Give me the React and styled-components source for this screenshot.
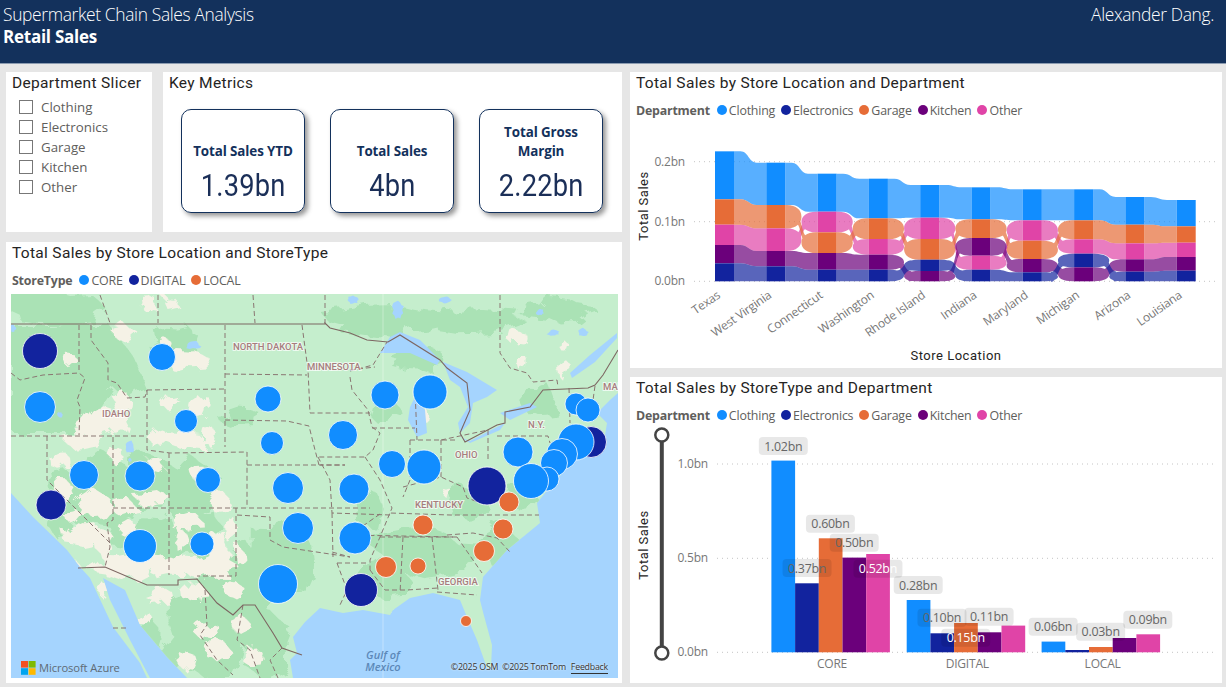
import React from "react";
import styled, { createGlobalStyle } from "styled-components";

const GlobalStyle = createGlobalStyle`
  html, body { margin: 0; padding: 0; background: #e6e6e6; }
  body { width: 1226px; height: 687px; overflow: hidden; font-family: "Open Sans", "Liberation Sans", sans-serif; }
`;

const COLORS = {
  Clothing: "#118DFF",
  Electronics: "#12239E",
  Garage: "#E66C37",
  Kitchen: "#6B007B",
  Other: "#E044A7",
};

const Page = styled.div`
  width: 1226px;
  height: 687px;
  display: flex;
  flex-direction: column;
`;

const Header = styled.header`
  height: 64px;
  flex: none;
  background: #13315c;
  border-bottom: 1px solid #8b9bb0;
  box-sizing: border-box;
  color: #fff;
  display: flex;
  justify-content: space-between;
  padding: 2px 12px 0 3px;
`;

const HeaderTitle = styled.div`
  font-size: 17.4px;
  line-height: 24px;
  font-weight: 300;
  letter-spacing: -0.35px;
`;

const HeaderSub = styled.div`
  font-size: 17px;
  line-height: 22px;
  font-weight: 700;
  letter-spacing: -0.25px;
`;

const Body = styled.div`
  display: flex;
  gap: 8px;
  padding: 8px 4px 0 6px;
`;

const Column = styled.div`
  width: ${(p) => p.$w}px;
  display: flex;
  flex-direction: column;
  gap: ${(p) => p.$gap}px;
`;

const TopRow = styled.div`
  display: flex;
  gap: 11px;
`;

const Panel = styled.section`
  background: #fff;
  box-sizing: border-box;
  width: ${(p) => p.$w}px;
  height: ${(p) => p.$h}px;
  padding: 1px 0 0 6px;
  position: relative;
`;

const Title = styled.h2`
  margin: 0;
  font-family: Roboto, "Liberation Sans", sans-serif;
  font-weight: 400;
  font-size: 15.5px;
  line-height: 20px;
  letter-spacing: 0.32px;
  color: #252423;
`;

const Legend = styled.div`
  display: flex;
  align-items: center;
  height: 18px;
  margin-top: 8px;
  font-size: 12.4px;
  letter-spacing: -0.2px;
  color: #605e5c;
`;

const LegendName = styled.span`
  font-weight: 700;
  margin-right: 7px;
`;

const LegendItem = styled.span`
  display: flex;
  align-items: center;
  gap: 2px;
  margin-right: 6px;
`;

const Dot = styled.i`
  width: 10px;
  height: 10px;
  border-radius: 50%;
  background: ${(p) => p.$c};
`;

const SlicerList = styled.div`
  margin: 4px 0 0 7px;
  display: flex;
  flex-direction: column;
`;

const SlicerRow = styled.label`
  display: flex;
  align-items: center;
  gap: 8px;
  height: 20px;
  font-size: 13.3px;
  color: #605e5c;
`;

const Check = styled.span`
  width: 12px;
  height: 12px;
  border: 1px solid #777;
`;

const Cards = styled.div`
  display: flex;
  gap: 25px;
  margin: 16px 0 0 12px;
`;

const Card = styled.div`
  width: 124px;
  height: 104px;
  box-sizing: border-box;
  border: 1px solid #13315c;
  border-radius: 10px;
  box-shadow: 3px 3px 5px rgba(0, 0, 0, 0.42);
  display: flex;
  flex-direction: column;
  align-items: center;
  justify-content: flex-end;
  padding-bottom: 4px;
`;

const CardLabel = styled.div`
  font-size: 13.4px;
  line-height: 19px;
  font-weight: 700;
  letter-spacing: -0.1px;
  color: #13315c;
  text-align: center;
  width: 112px;
`;

const CardValue = styled.div`
  font-family: Roboto, "Liberation Sans", sans-serif;
  font-size: 31px;
  line-height: 44px;
  margin-top: 3px;
  letter-spacing: 0.2px;
  color: #1b2f58;
  transform: scaleX(0.88);
`;

const MapFrame = styled.div`
  position: relative;
  width: 607px;
  height: 384px;
  margin: 5px 0 0 -1px;
  overflow: hidden;
`;

const MapCanvas = styled.svg`
  display: block;
`;

const ChartCanvas = styled.svg`
  display: block;
  margin-left: -6px;
`;

const CountryLine = styled.path`
  fill: none;
  stroke: #7d6662;
  stroke-width: 1.1;
`;

const StateLine = styled.path`
  fill: none;
  stroke: #8a7672;
  stroke-width: 1;
  stroke-dasharray: 5 3;
`;

const PlaceLabel = styled.text`
  font-family: Roboto, "Liberation Sans", sans-serif;
  font-size: 9.5px;
  font-weight: 500;
  fill: #a77d7d;
  stroke: #fff;
  stroke-width: 2px;
  stroke-opacity: 0.7;
  paint-order: stroke;
`;

const SeaLabel = styled.text`
  font-family: "Open Sans", sans-serif;
  font-size: 11px;
  font-style: italic;
  font-weight: 600;
  fill: #5c88b8;
  text-anchor: middle;
`;

const Bubble = styled.circle`
  stroke: rgba(255, 255, 255, 0.8);
  stroke-width: 1;
`;

const AzureMark = styled.div`
  position: absolute;
  left: 10px;
  bottom: 3px;
  display: flex;
  align-items: center;
  gap: 3px;
  font-size: 11.2px;
  letter-spacing: -0.1px;
  color: #5f6b75;
`;

const Attribution = styled.div`
  position: absolute;
  right: 10px;
  bottom: 4px;
  display: flex;
  gap: 4px;
  font-size: 8.8px;
  letter-spacing: -0.22px;
  color: #333;
  text-shadow: 0 0 2px #fff;
`;

const FeedbackLink = styled.span`
  margin-left: 1px;
  border-bottom: 1px solid #333;
`;

const GridLine = styled.line`
  stroke: #c4c4c4;
  stroke-width: 1;
  stroke-dasharray: 1 4;
`;

const AxisText = styled.text`
  font-size: 12px;
  letter-spacing: -0.2px;
  fill: #777;
`;

const AxisTitle = styled.text`
  font-family: Roboto, "Liberation Sans", sans-serif;
  font-size: 13px;
  letter-spacing: 0.5px;
  fill: #252423;
  text-anchor: middle;
`;

const Ribbon = styled.path`
  fill-opacity: 0.7;
`;

const Pill = styled.rect`
  fill: rgba(0, 0, 0, 0.09);
`;

const PillText = styled.text`
  font-size: 12.4px;
  letter-spacing: -0.25px;
  text-anchor: middle;
  fill: ${(p) => (p.$light ? "#fff" : "#666")};
`;

const SliderTrack = styled.line`
  stroke: #444;
  stroke-width: 4;
`;

const SliderKnob = styled.circle`
  fill: #fff;
  stroke: #444;
  stroke-width: 2.5;
`;

// ---------- ribbon chart data, read off the picture (page pixels) ----------
const C = "Clothing", E = "Electronics", G = "Garage", K = "Kitchen", O = "Other";
const ribbonY = (z) => 60 + z / 3;
const RIBBON_COLS = [
  { name: "Texas", order: [C, G, O, K, E], stops: [277, 421, 497, 558, 613, 667] },
  { name: "West Virginia", order: [C, G, O, K, E], stops: [311, 438, 508, 576, 622, 667] },
  { name: "Connecticut", order: [C, O, G, K, E], stops: [344, 458, 520, 582, 632, 667] },
  { name: "Washington", order: [C, G, O, K, E], stops: [359, 478, 540, 587, 632, 667] },
  { name: "Rhode Island", order: [C, O, G, E, K], stops: [378, 476, 540, 602, 636, 667] },
  { name: "Indiana", order: [C, G, K, O, E], stops: [385, 481, 537, 590, 632, 667] },
  { name: "Maryland", order: [C, O, G, K, E], stops: [391, 484, 545, 600, 640, 667] },
  { name: "Michigan", order: [C, G, O, E, K], stops: [391, 484, 541, 584, 625, 667] },
  { name: "Arizona", order: [C, G, O, K, E], stops: [414, 497, 553, 601, 638, 667] },
  { name: "Louisiana", order: [C, G, O, K, E], stops: [423, 502, 551, 594, 635, 667] },
];
const COL_W = 19;
const colX = (i) => 715 + i * 51.3;

function band(col, dep) {
  const i = col.order.indexOf(dep);
  return { top: ribbonY(col.stops[i]), bottom: ribbonY(col.stops[i + 1]), index: i };
}

function ribbonPath(x0, x1, l, r) {
  const w = x1 - x0;
  if (l.index === r.index) {
    const a = x0 + 0.2 * w, b = x0 + 0.45 * w, c = x0 + 0.7 * w;
    return `M${x0} ${l.top}L${a} ${l.top}C${b} ${l.top} ${b} ${r.top} ${c} ${r.top}L${x1} ${r.top}` +
      `L${x1} ${r.bottom}L${c} ${r.bottom}C${b} ${r.bottom} ${b} ${l.bottom} ${a} ${l.bottom}L${x0} ${l.bottom}Z`;
  }
  const mid = x0 + w / 2;
  const c0 = (l.top + l.bottom) / 2;
  const c1 = (r.top + r.bottom) / 2;
  const k0 = (l.bottom - l.top) * 0.22;
  const k1 = (r.bottom - r.top) * 0.22;
  const s = x0 + 0.05 * w, e = x1 - 0.05 * w;
  const left = `M${x0} ${l.top}L${s} ${l.top}C${x0 + 0.34 * w} ${l.top} ${mid} ${l.top + k0} ${mid} ${c0}` +
    `C${mid} ${l.bottom - k0} ${x0 + 0.34 * w} ${l.bottom} ${s} ${l.bottom}L${x0} ${l.bottom}Z`;
  const right = `M${mid} ${c1}C${mid} ${r.top + k1} ${x1 - 0.34 * w} ${r.top} ${e} ${r.top}L${x1} ${r.top}` +
    `L${x1} ${r.bottom}L${e} ${r.bottom}C${x1 - 0.34 * w} ${r.bottom} ${mid} ${r.bottom - k1} ${mid} ${c1}Z`;
  const sx = x0 + 0.28 * w, ex = x1 - 0.28 * w;
  const strip = `M${sx} ${c0 - 5}C${mid} ${c0 - 5} ${mid} ${c1 - 5} ${ex} ${c1 - 5}L${ex} ${c1 + 5}C${mid} ${c1 + 5} ${mid} ${c0 + 5} ${sx} ${c0 + 5}Z`;
  return left + strip + right;
}

function RibbonChart() {
  const deps = [C, O, G, K, E];
  return (
    <ChartCanvas width="592" height="248" viewBox="630 120 592 248">
      {[282.3, 222.7, 162.7].map((y) => (
        <GridLine key={y} x1="694" x2="1216" y1={y} y2={y} />
      ))}
      {[["0.0bn", 282.3], ["0.1bn", 222.7], ["0.2bn", 162.7]].map(([t, y]) => (
        <AxisText key={t} x="685" y={y + 4} textAnchor="end">{t}</AxisText>
      ))}
      <AxisTitle transform="rotate(-90 648 207)" x="648" y="207">Total Sales</AxisTitle>
      {RIBBON_COLS.slice(0, -1).map((col, i) =>
        deps.map((d) => (
          <Ribbon
            key={col.name + d}
            fill={COLORS[d]}
            d={ribbonPath(colX(i) + COL_W, colX(i + 1), band(col, d), band(RIBBON_COLS[i + 1], d))}
          />
        ))
      )}
      {RIBBON_COLS.map((col, i) =>
        col.order.map((d) => {
          const b = band(col, d);
          return <rect key={col.name + d} x={colX(i)} y={b.top} width={COL_W} height={b.bottom - b.top} fill={COLORS[d]} />;
        })
      )}
      {RIBBON_COLS.map((col, i) => {
        const x = colX(i) + 6;
        return (
          <AxisText key={col.name} x={x} y="298" textAnchor="end" transform={`rotate(-35 ${x} 298)`}>{col.name}</AxisText>
        );
      })}
      <AxisTitle x="956" y="361">Store Location</AxisTitle>
    </ChartCanvas>
  );
}

// ---------- clustered bars ----------
const BAR_GROUPS = [
  { name: "CORE", x: 771.4, center: 832, heights: [191.7, 69, 114, 94.7, 98.3] },
  { name: "DIGITAL", x: 906.7, center: 967.3, heights: [52.3, 19, 29.3, 20, 26.7] },
  { name: "LOCAL", x: 1041.6, center: 1102.6, heights: [10.7, 2.3, 5.3, 14.3, 18] },
];
const BAR_W = 23.7;
const BAR_BASE = 653.3;
const BAR_LABELS = [
  ["1.02bn", 413, 231], ["0.37bn", 475, 597], ["0.60bn", 536, 464], ["0.50bn", 598, 521],
  ["0.52bn", 660, 599, true], ["0.28bn", 765, 648], ["0.10bn", 827, 746], ["0.15bn", 889, 806, true],
  ["0.11bn", 950, 743], ["0.06bn", 1117, 773], ["0.03bn", 1241, 788], ["0.09bn", 1364, 752],
];

function BarChart() {
  const deps = [C, E, G, K, O];
  return (
    <ChartCanvas width="592" height="258" viewBox="630 425 592 258">
      {[465, 559.3, 653.3].map((y) => (
        <GridLine key={y} x1="717" x2="1216" y1={y} y2={y} />
      ))}
      {[["1.0bn", 465], ["0.5bn", 559.3], ["0.0bn", 653.3]].map(([t, y]) => (
        <AxisText key={t} x="708" y={y + 4} textAnchor="end">{t}</AxisText>
      ))}
      <SliderTrack x1="661.8" x2="661.8" y1="436" y2="654" />
      <SliderKnob cx="661.8" cy="436" r="6.5" />
      <SliderKnob cx="661.8" cy="654" r="6.5" />
      <AxisTitle transform="rotate(-90 648 546)" x="648" y="546">Total Sales</AxisTitle>
      {BAR_GROUPS.map((g) =>
        g.heights.map((h, i) => (
          <rect key={g.name + i} x={g.x + i * BAR_W} y={BAR_BASE - h} width={BAR_W} height={h} fill={COLORS[deps[i]]} />
        ))
      )}
      {BAR_GROUPS.map((g) => (
        <AxisText key={g.name} x={g.center} y="669" textAnchor="middle">{g.name}</AxisText>
      ))}
      {BAR_LABELS.map(([t, zx, zy, light]) => {
        const x = 625 + zx / 2.609;
        const y = 370 + zy / 3;
        return (
          <g key={t}>
            <Pill x={x - 24.5} y={y - 9} width="49" height="18" rx="4" />
            <PillText x={x} y={y + 4.5} $light={light}>{t}</PillText>
          </g>
        );
      })}
    </ChartCanvas>
  );
}

// ---------- map ----------
function blobPath([cx, cy, rx, ry], seed) {
  const n = 16;
  let d = "";
  for (let i = 0; i < n; i++) {
    const a = (i / n) * Math.PI * 2;
    const noise = Math.abs(Math.sin((i + 1) * 12.9898 + seed * 78.233) * 43758.5453) % 1;
    const k = 0.68 + noise * 0.5;
    d += `${i ? "L" : "M"}${(cx + Math.cos(a) * rx * k).toFixed(1)} ${(cy + Math.sin(a) * ry * k).toFixed(1)}`;
  }
  return d + "Z";
}
const blobs = (list, s) => list.map((b, i) => blobPath(b, i + s)).join("");

const LAND =
  "M11 294L618 294L618 393L610 400L597 413L607 423L603 447L577 457L550 487L537 503L540 523L507 550L483 577L480 600L483 612L492 645L491 668L487 668L477 640L467 617L460 600L433 593L410 598L393 610L390 615L363 610L343 613L320 608L305 622L293 637L297 653L290 660L293 678L187 678L167 657L140 625L125 590L103 578L110 600L130 640L150 678L147 678L140 663L113 627L90 578L80 567L67 550L33 517L11 493Z";

const DARK_GREEN =
  "M11 325L110 325L133 357L147 390L127 400L113 387L100 407L80 417L77 433L11 433Z" +
  blobs([
    [175, 345, 28, 20], [100, 490, 58, 38], [150, 480, 32, 32], [190, 490, 32, 30], [60, 520, 16, 20], [160, 540, 24, 28],
    [200, 535, 22, 26], [230, 585, 42, 44], [280, 560, 40, 46], [210, 635, 54, 46], [265, 640, 30, 36], [130, 535, 26, 12],
    [427, 555, 60, 26], [470, 500, 20, 22], [500, 545, 24, 22], [385, 580, 30, 22], [395, 320, 70, 16], [480, 320, 50, 14],
    [560, 310, 40, 12], [420, 360, 30, 12], [540, 400, 20, 18], [240, 420, 22, 10], [370, 510, 18, 18], [520, 500, 24, 14],
    [385, 410, 14, 14], [150, 640, 10, 24], [55, 308, 52, 20],
  ], 1);

const CREAM = blobs([
  [148, 302, 9, 8], [170, 303, 8, 5], [125, 333, 10, 8], [70, 360, 7, 7], [187, 360, 24, 11], [120, 400, 9, 11],
  [97, 422, 19, 15], [120, 423, 10, 12], [83, 440, 22, 8], [170, 403, 10, 8], [200, 405, 9, 11], [157, 437, 10, 10],
  [183, 440, 24, 10], [210, 437, 7, 10], [157, 467, 10, 8], [117, 457, 6, 10], [60, 460, 8, 10], [63, 490, 11, 11],
  [93, 503, 22, 14], [83, 533, 19, 14], [103, 543, 10, 14], [123, 507, 15, 10], [150, 497, 17, 7], [125, 565, 34, 14],
  [167, 567, 22, 14], [187, 523, 17, 10], [220, 503, 11, 10], [203, 567, 32, 12], [217, 547, 13, 17], [230, 530, 7, 13],
  [180, 540, 7, 10], [207, 630, 13, 10], [217, 650, 13, 10], [193, 590, 13, 10], [233, 590, 10, 10], [160, 597, 13, 10],
  [143, 620, 9, 7], [253, 657, 10, 10], [185, 660, 8, 10], [200, 475, 8, 8], [165, 345, 8, 6], [75, 570, 8, 10],
  [105, 590, 5, 10], [240, 625, 8, 8], [517, 337, 9, 9], [523, 363, 7, 8], [563, 345, 5, 5], [565, 370, 5, 11],
  [447, 493, 5, 3], [425, 415, 3, 10], [395, 610, 8, 3], [130, 530, 10, 8], [70, 515, 8, 8], [240, 555, 6, 9],
], 100);

const LAKES =
  "M380 353L390 337L400 332L420 340L440 360L437 365L410 353L390 353Z" +
  "M408 420L410 407L415 397L425 410L427 433L417 437Z" +
  "M443 362L467 372L497 390L487 397L473 403L470 423L460 433L458 423L468 407L460 387L450 380Z" +
  "M460 437L470 441L497 427L505 423L500 430L470 443Z" +
  "M500 413L530 403L537 407L510 420Z" +
  "M570 373L590 355L617 333L617 338L595 362L572 378Z" +
  blobs([
    [130, 447, 4, 7], [193, 345, 8, 4], [398, 310, 6, 9], [353, 300, 6, 4], [583, 332, 5, 4],
    [553, 333, 6, 3], [13, 328, 3, 4], [60, 415, 3, 3], [130, 460, 2, 2], [540, 312, 4, 3], [445, 300, 6, 4],
  ], 200);

const COUNTRY = [
  "M11 324L325 324L325 323L330 328L350 333L367 340L388 342L400 335L440 360L447 368L467 383L470 410L460 433L465 442L497 425L505 423L505 412L530 407L543 390L588 388L595 385L603 375L618 350",
  "M78 568L105 567L147 585L178 585L178 580L197 579L217 603L233 615L243 605L255 605L273 633L282 648L302 655",
];

const STATES = [
  "M100 295L110 323M158 295L158 323M253 295L255 323M325 295L325 323M500 295L500 353L510 368L527 373L533 382L557 380L558 387",
  "M79 325L79 373M91 325L91 340L108 363L108 380L117 383L127 398L145 397L147 390",
  "M11 373L20 380L43 375L79 373L85 378L77 400L80 407L79 435",
  "M11 436L147 436M147 390L225 389M147 390L147 450L170 453L247 452L247 465L247 508",
  "M225 325L225 447M225 374L307 375M225 420L287 421L309 426L315 450L319 465",
  "M302 325L308 370L310 413L330 413L370 413M247 465L345 465L320 465M113 508L370 508",
  "M47 436L47 480L112 545M113 437L113 520L107 523L110 547L105 567",
  "M169 453L169 575M236 508L236 576L197 576M237 515L270 517L270 540L283 547L350 557L332 552",
  "M350 371L373 365L387 342M350 370L375 367M350 377L352 390L368 410L372 427L380 433L373 450L365 457L318 457",
  "M372 428L415 428M415 388L417 440M410 440L457 440M441 440L441 477M410 440L410 480L403 497M403 487L441 477L463 487L467 498L487 505",
  "M318 457L330 480L332 513L390 515L390 513L450 515L539 515M332 513L333 557M365 457L380 480L392 508L380 537L370 560L370 570",
  "M380 514L350 535L453 537M380 537L457 537M403 537L400 593M432 537L438 590M437 592L477 595M457 537L482 573M447 535L473 533L497 538L510 552",
  "M337 563L368 563M337 563L347 590L340 605M370 570L385 590L407 590L438 588",
  "M488 430L488 460M497 436L548 436L550 443M569 388L570 423M595 386L593 400M441 440L488 430",
  "M205 590L207 625L200 635L217 660L233 675M243 605L237 640L250 650L260 678M282 648L270 660L278 678M113 628L128 628",
];

const BUBBLES = [
  [40, 351, 17.5, "d"], [162, 357, 13.5], [40, 407, 15.5], [268, 399, 13], [186, 421, 11.5], [272, 443, 11.5],
  [84, 475, 14.5], [140, 476, 15], [208, 480, 12.5], [288, 488, 15.5], [51, 505, 15, "d"], [298, 528, 15.5],
  [140, 546, 16.5], [202, 544, 12], [278, 584, 19.5], [385, 395, 14], [430, 392, 17], [343, 435, 14.5],
  [392, 464, 13.5], [424, 467, 17], [354, 489, 15], [355, 538, 16], [487, 486, 19, "d"], [518, 452, 15],
  [576, 404, 11], [588, 410, 12], [591, 442, 15.5, "d"], [576, 442, 18], [562, 454, 15.5], [554, 463, 13.5],
  [547, 479, 12], [531, 481, 17.5], [509, 502, 10, "o"], [423, 525, 10, "o"], [503, 529, 10, "o"],
  [484, 551, 10.5, "o"], [386, 567, 10.5, "o"], [418, 566, 8, "o"], [361, 590, 16.5, "d"], [466, 621, 5.5, "o"],
];
const BUBBLE_FILL = { d: COLORS.Electronics, o: COLORS.Garage };

const PLACES = [
  ["NORTH DAKOTA", 233, 350], ["MINNESOTA", 307, 370], ["IDAHO", 102, 417], ["OHIO", 455, 458],
  ["N.Y.", 528, 428], ["KENTUCKY", 415, 508], ["GEORGIA", 438, 585], ["MAI", 603, 390],
];

function UsMap() {
  return (
    <MapCanvas width="607" height="384" viewBox="11 294 607 384">
      <defs>
        <filter id="rough" x="0" y="0" width="100%" height="100%" filterUnits="objectBoundingBox">
          <feTurbulence type="fractalNoise" baseFrequency="0.06" numOctaves="3" seed="7" result="n" />
          <feDisplacementMap in="SourceGraphic" in2="n" scale="16" />
        </filter>
        <clipPath id="land"><path d={LAND} /></clipPath>
      </defs>
      <rect x="11" y="294" width="607" height="384" fill="#a5d4fe" />
      <path d={LAND} fill="#c5eecd" />
      <g clipPath="url(#land)">
        <g filter="url(#rough)">
          <path d={DARK_GREEN} fill="#aae2b5" />
          <path d={CREAM} fill="#f5f2e6" />
        </g>
      </g>
      <path d={LAKES} fill="#a5d4fe" />
      <line x1="383" y1="294" x2="383" y2="678" stroke="#fff" strokeOpacity="0.35" />
      <StateLine d={STATES.join("")} />
      <CountryLine d={COUNTRY.join("")} />
      {PLACES.map(([t, x, y]) => (
        <PlaceLabel key={t} x={x} y={y}>{t}</PlaceLabel>
      ))}
      <SeaLabel x="383" y="659">Gulf of<tspan x="383" dy="12">Mexico</tspan></SeaLabel>
      <text x="472" y="690" fontSize="14" fontFamily="Open Sans" fill="#444">Havana</text>
      {BUBBLES.map(([x, y, r, k]) => (
        <Bubble key={`${x}-${y}`} cx={x} cy={y} r={r} fill={BUBBLE_FILL[k] || COLORS.Clothing} />
      ))}
    </MapCanvas>
  );
}

function AzureLogo() {
  return (
    <svg width="15" height="14" viewBox="0 0 15 14">
      <rect width="7" height="6.6" fill="#f25022" />
      <rect x="7.6" width="7" height="6.6" fill="#7fba00" />
      <rect y="7.2" width="7" height="6.6" fill="#00a4ef" />
      <rect x="7.6" y="7.2" width="7" height="6.6" fill="#ffb900" />
    </svg>
  );
}

const DEPARTMENTS = Object.keys(COLORS);

function DepartmentLegend() {
  return (
    <Legend>
      <LegendName>Department</LegendName>
      {DEPARTMENTS.map((d) => (
        <LegendItem key={d}><Dot $c={COLORS[d]} />{d}</LegendItem>
      ))}
    </Legend>
  );
}

export default function App() {
  return (
    <Page>
      <GlobalStyle />
      <Header>
        <div>
          <HeaderTitle>Supermarket Chain Sales Analysis</HeaderTitle>
          <HeaderSub>Retail Sales</HeaderSub>
        </div>
        <HeaderTitle>Alexander Dang.</HeaderTitle>
      </Header>
      <Body>
        <Column $w={616} $gap={10}>
          <TopRow>
            <Panel $w={146} $h={160}>
              <Title>Department Slicer</Title>
              <SlicerList>
                {DEPARTMENTS.map((d) => (
                  <SlicerRow key={d}><Check />{d}</SlicerRow>
                ))}
              </SlicerList>
            </Panel>
            <Panel $w={459} $h={160}>
              <Title>Key Metrics</Title>
              <Cards>
                <Card>
                  <CardLabel>Total Sales YTD</CardLabel>
                  <CardValue>1.39bn</CardValue>
                </Card>
                <Card>
                  <CardLabel>Total Sales</CardLabel>
                  <CardValue>4bn</CardValue>
                </Card>
                <Card>
                  <CardLabel>Total Gross Margin</CardLabel>
                  <CardValue>2.22bn</CardValue>
                </Card>
              </Cards>
            </Panel>
          </TopRow>
          <Panel $w={616} $h={441}>
            <Title>Total Sales by Store Location and StoreType</Title>
            <Legend>
              <LegendName>StoreType</LegendName>
              <LegendItem><Dot $c={COLORS.Clothing} />CORE</LegendItem>
              <LegendItem><Dot $c={COLORS.Electronics} />DIGITAL</LegendItem>
              <LegendItem><Dot $c={COLORS.Garage} />LOCAL</LegendItem>
            </Legend>
            <MapFrame>
              <UsMap />
              <AzureMark><AzureLogo />Microsoft Azure</AzureMark>
              <Attribution>
                <span>©2025 OSM</span>
                <span>©2025 TomTom</span>
                <FeedbackLink>Feedback</FeedbackLink>
              </Attribution>
            </MapFrame>
          </Panel>
        </Column>
        <Column $w={592} $gap={9}>
          <Panel $w={592} $h={296}>
            <Title>Total Sales by Store Location and Department</Title>
            <DepartmentLegend />
            <RibbonChart />
          </Panel>
          <Panel $w={592} $h={306}>
            <Title>Total Sales by StoreType and Department</Title>
            <DepartmentLegend />
            <BarChart />
          </Panel>
        </Column>
      </Body>
    </Page>
  );
}
